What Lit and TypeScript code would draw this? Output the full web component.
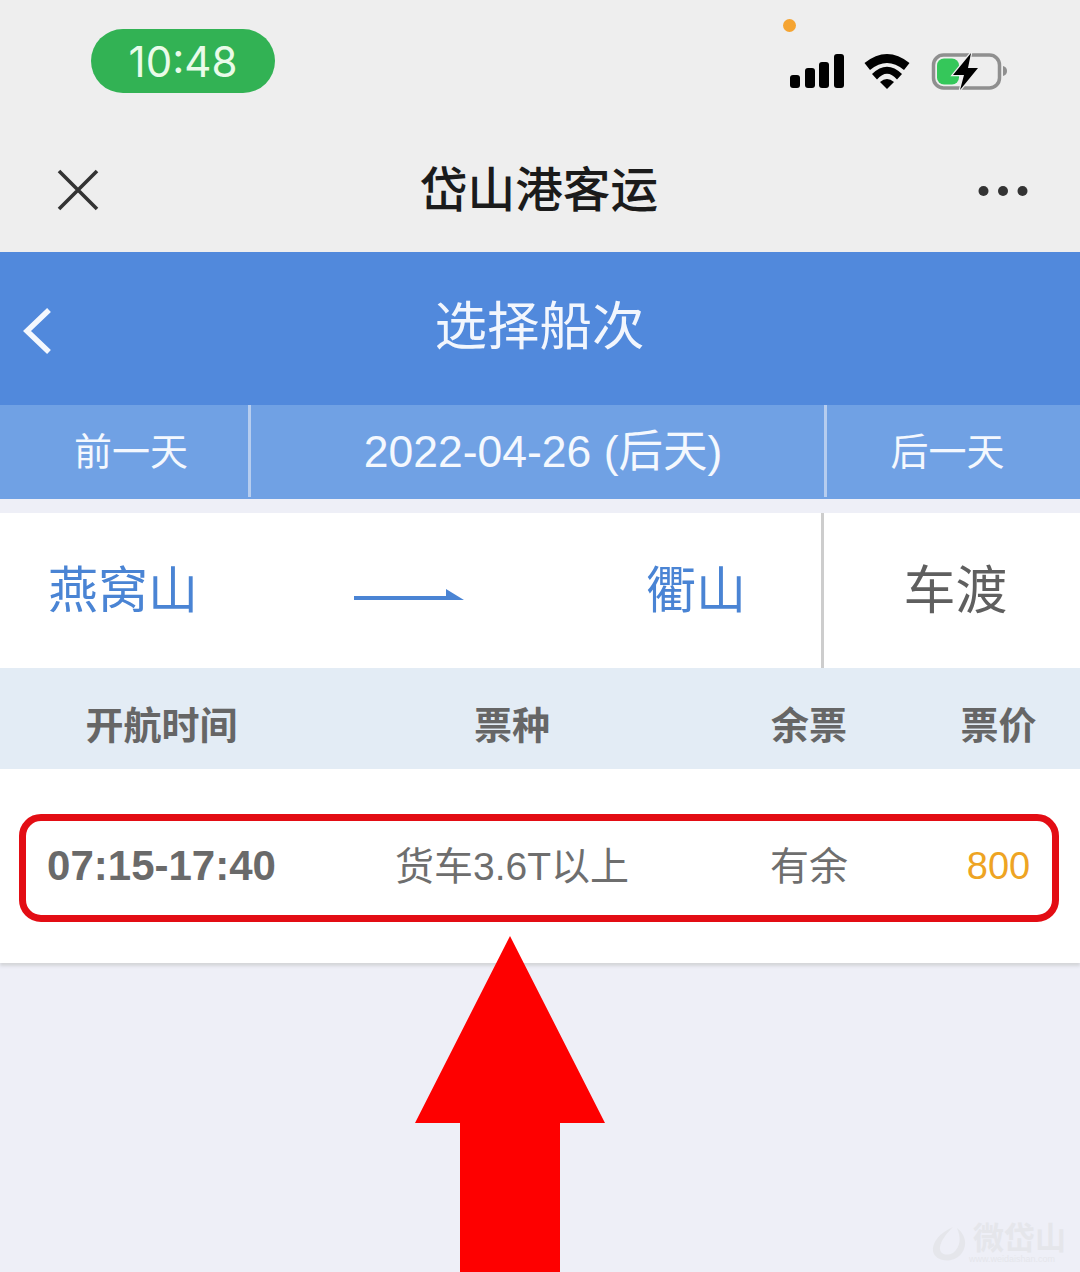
import { LitElement, html, css } from "lit";
import { customElement } from "lit/decorators.js";

@customElement("app-root")
export class AppRoot extends LitElement {
  static styles = css`
    :host { display: block; width: 1080px; height: 1272px; overflow: hidden; position: relative; background: #eeeff7; font-family: "Liberation Sans", "Noto Sans CJK SC", sans-serif; }
    svg { display: block; flex: none; }
    .top { background: #eeeeee; height: 252px; display: flex; flex-direction: column; }
    .status { height: 128px; display: flex; align-items: flex-start; padding-left: 91px; }
    .pill { width: 184px; height: 64px; margin-top: 29px; border-radius: 32px; background: #32b254; color: #e9fbe9; font: 400 42px/66px Inter, sans-serif; text-align: center; }
    .sys { margin-left: 515px; margin-top: 53px; display: flex; }
    .dot { position: absolute; left: 783px; top: 19px; width: 13px; height: 13px; border-radius: 50%; background: #f5a431; }
    .nav { flex: 1; display: flex; align-items: center; justify-content: space-between; padding: 0 52px 0 57px; position: relative; }
    .nav h1 { margin: 0; font-size: 47.6px; line-height: 1; font-weight: 500; color: #1b1b1b; position: absolute; left: -2px; right: 0; text-align: center; top: 39px; }
    .hdr { height: 153px; background: #5189dc; display: flex; align-items: center; position: relative; }
    .hdr svg { margin-left: 22px; margin-top: 5px; }
    .hdr h2 { margin: 0; font-size: 52.5px; font-weight: 400; line-height: 1; color: #f2f6fd; position: absolute; left: -1px; right: 0; text-align: center; top: 49px; }
    .dates { height: 94px; background: #70a1e4; color: #f4f8fe; display: flex; font-size: 38px; }
    .dates > div { display: flex; align-items: center; justify-content: center; padding-bottom: 8px; box-sizing: border-box; }
    .d1 { width: 248px; padding-left: 14px; }
    .dates > .d2 { width: 573px; padding-left: 11px; font-size: 44.5px; padding-bottom: 10px; }
    .d3 { flex: 1; padding-right: 12px; }
    .dates > .vr { width: 3px; flex: none; background: #b6cdef; height: 92px; padding: 0; }
    .route { margin-top: 14px; height: 155px; background: #fff; display: flex; }
    .way { width: 824px; box-sizing: border-box; border-right: 3px solid #cdcdcd; flex: none; display: flex; align-items: center; justify-content: space-between; padding: 0 75px 10px 48px; color: #4a84d4; font-size: 50px; }
    .way svg { margin-right: 26px; margin-top: 19px; }
    .kind { flex: 1; display: flex; align-items: center; justify-content: center; font-size: 52px; color: #5f5f5f; padding-bottom: 8px; padding-left: 7px; }
    .cols { display: grid; grid-template-columns: 323px 378px 216px 163px; align-items: center; text-align: center; }
    .thead { height: 101px; box-sizing: border-box; padding-top: 8px; background: #e3ecf5; color: #666; font-size: 38px; font-weight: 700; }
    .tbody { height: 194px; background: #fff; box-shadow: 0 3px 3px #d4d5d9; position: relative; }
    .row { height: 194px; color: #6e6e6e; font-size: 39px; }
    .cjk { padding-bottom: 6px; }
    .time { font-size: 42px; font-weight: 700; color: #6a6a6a; }
    .price { color: #eea423; font-size: 38px; }
    .mark { position: absolute; left: 19px; top: 45px; width: 1040px; height: 108px; box-sizing: border-box; border: 7px solid #e30d14; border-radius: 22px; }
    .big { position: absolute; left: 415px; top: 936px; }
    .wm { position: absolute; left: 931px; top: 1224px; width: 140px; display: flex; gap: 6px; color: #e5e6eb; }
    .wm b { font-size: 31px; line-height: 30px; font-weight: 700; white-space: nowrap; }
    .wm small { position: absolute; left: 38px; top: 31px; font-size: 9px; line-height: 9px; white-space: nowrap; }
  `;

  render() {
    return html`
      <div class="top">
        <div class="status">
          <div class="pill">10:48</div>
          <div class="sys">
            <svg width="220" height="40" viewBox="0 0 220 40">
              <g fill="#000">
                <rect x="0" y="22" width="10" height="13" rx="3"/>
                <rect x="15" y="15" width="10" height="20" rx="3"/>
                <rect x="29" y="9" width="10" height="26" rx="3"/>
                <rect x="44" y="1" width="10" height="34" rx="3"/>
                <path d="M74.5 10 Q97 -8 119.5 10 L114 17 Q97 3 80 17 Z"/>
                <path d="M82 21 Q97 6.4 112 21 L107 26.5 Q97 15 87 26.5 Z"/>
                <path d="M90 29 Q97 23 104 29 L97 36 Z"/>
              </g>
              <rect x="143.5" y="2" width="66" height="33" rx="10" fill="none" stroke="#8f8f8f" stroke-width="3.5"/>
              <path d="M213 13 q4 1 4 5 t-4 5 z" fill="#8f8f8f"/>
              <rect x="147" y="5.5" width="22" height="26" rx="7" fill="#35c75a"/>
              <path d="M181 0 L163 22 L174 22 L170 37 L188 15 L178 15 Z" fill="#000" stroke="#eeeeee" stroke-width="2.5" paint-order="stroke"/>
            </svg>
          </div>
        </div>
        <div class="nav">
          <svg width="42" height="42" viewBox="0 0 42 42"><path d="M2 2 L40 40 M40 2 L2 40" stroke="#333" stroke-width="3.6" fill="none"/></svg>
          <h1>岱山港客运</h1>
          <svg width="50" height="12" viewBox="0 0 50 12" style="margin-top:1px"><g fill="#333"><circle cx="5.5" cy="6" r="5"/><circle cx="25" cy="6" r="5"/><circle cx="44.5" cy="6" r="5"/></g></svg>
        </div>
      </div>
      <div class="hdr">
        <svg width="32" height="48" viewBox="0 0 32 48"><path d="M27 3 L5 24 L27 45" stroke="#f4f8fe" stroke-width="5.5" fill="none"/></svg>
        <h2>选择船次</h2>
      </div>
      <div class="dates">
        <div class="d1">前一天</div>
        <div class="vr"></div>
        <div class="d2">2022-04-26 (后天)</div>
        <div class="vr"></div>
        <div class="d3">后一天</div>
      </div>
      <div class="route">
        <div class="way">
          <span>燕窝山</span>
          <svg width="110" height="12" viewBox="0 0 110 12"><path d="M0 7 H92 V0 L110 11 H0 Z" fill="#4a84d4"/></svg>
          <span>衢山</span>
        </div>
        <div class="kind">车渡</div>
      </div>
      <div class="cols thead">
        <span>开航时间</span><span>票种</span><span>余票</span><span>票价</span>
      </div>
      <div class="tbody">
        <div class="cols row">
          <span class="time">07:15-17:40</span><span class="cjk">货车3.6T以上</span><span class="cjk">有余</span><span class="price">800</span>
        </div>
        <div class="mark"></div>
      </div>
      <div class="dot"></div>
      <svg class="big" width="190" height="336" viewBox="0 0 190 336"><path d="M95 0 L190 187 H145 V336 H45 V187 H0 Z" fill="#fe0000"/></svg>
      <div class="wm">
        <svg width="36" height="40" viewBox="0 0 36 38"><path d="M22 2 C8 8 1 18 2 26 C3 33 12 37 20 35 C30 33 35 24 34 16 C33 10 30 6 26 3 C30 12 30 22 22 28 C14 32 8 28 9 22 C10 15 16 8 22 2 Z" fill="#e5e6eb"/></svg>
        <b>微岱山</b>
        <small>www.weidaishan.com</small>
      </div>
    `;
  }
}
